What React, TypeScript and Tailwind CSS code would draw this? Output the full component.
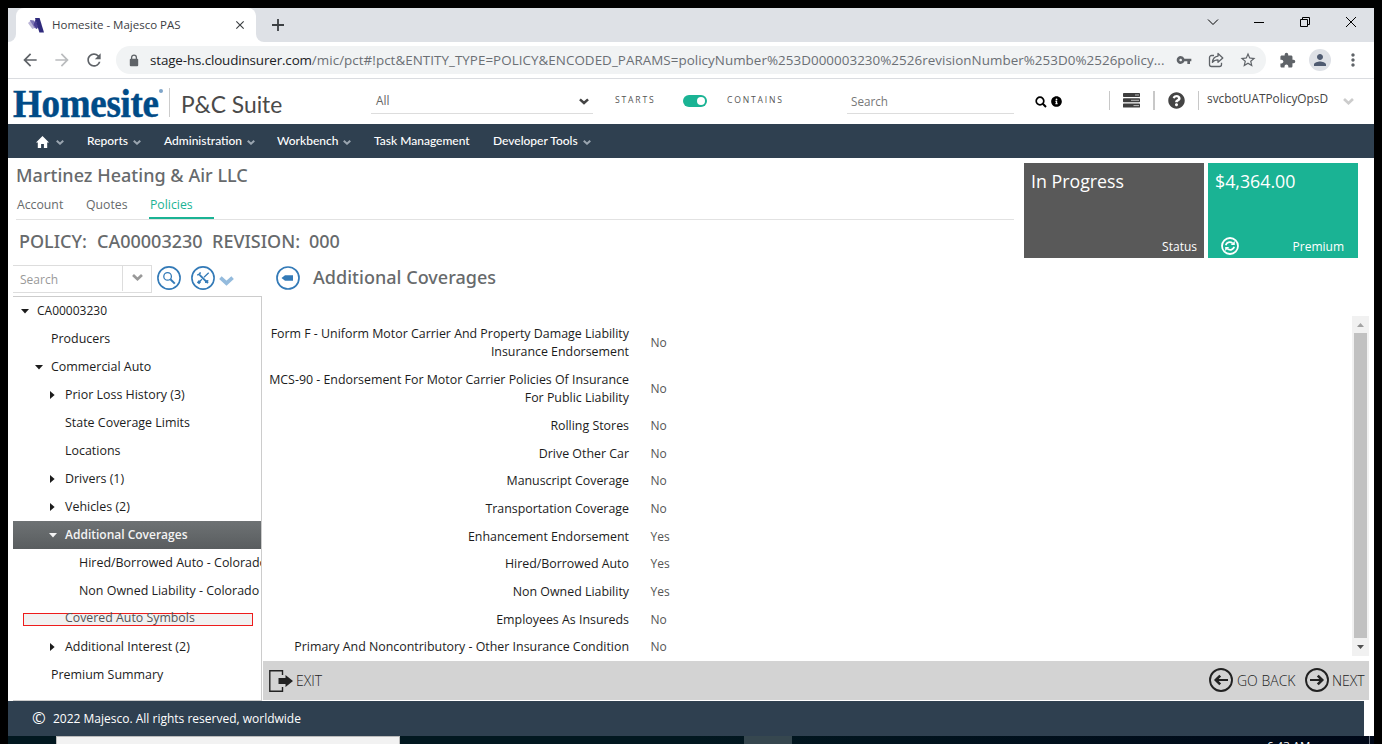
import React from 'react';
import { MdArrowBack, MdArrowForward, MdRefresh, MdLock, MdVpnKey, MdStarBorder, MdExtension, MdPerson, MdMoreVert, MdClose } from 'react-icons/md';
import { FaQuestionCircle, FaInfoCircle, FaSearch } from 'react-icons/fa';

function Chevron({ className }: { className: string }) {
  return (
    <svg viewBox="0 0 16 10" className={className} fill="none" stroke="currentColor" strokeWidth="4">
      <path d="M1.5 1.5 8 7.4 14.5 1.5" />
    </svg>
  );
}

function TabStrip() {
  return (
    <div className="flex h-[34px] shrink-0 bg-[#dee1e6]">
      <div className="flex w-2 items-end bg-white">
        <div className="h-full w-2 rounded-br-lg bg-[#dee1e6]" />
      </div>
      <div className="flex w-[240px] items-center rounded-t-lg bg-white pl-3">
        <svg viewBox="0 0 16 16" className="h-4 w-4 shrink-0">
          <path d="M0 6 3.5 3 6.5 11 4.4 12z" fill="#b9b3d6" />
          <path d="M1.8 3 6 3.4 9.4 12 6.4 11z" fill="#7d75b5" />
          <path d="M5.6 8 7.4 2 10.4 10 8.6 12z" fill="#4a3f92" />
          <path d="M7 1h4.600L16 15.500h-4.600z" fill="#2f2a7c" />
        </svg>
        <span className="ml-2 w-[172px] text-[11.5px] text-[#3c4043]">Homesite - Majesco PAS</span>
        <MdClose className="ml-[9px] h-[14px] w-[14px] text-[#3c4043]" />
      </div>
      <div className="flex w-2 bg-white">
        <div className="h-full w-2 rounded-bl-lg bg-[#dee1e6]" />
      </div>
      <svg viewBox="0 0 12 12" className="ml-2 mt-[11px] h-3 w-3" stroke="#3c4043" strokeWidth="1.8">
        <path d="M6 0v12M0 6h12" />
      </svg>
      <div className="ml-auto flex pt-[8px] pr-[17px] text-black">
        <svg viewBox="0 0 12 12" className="mr-[34px] h-3 w-3" fill="none" stroke="currentColor"><path d="m1 3.5 5 5 5-5" /></svg>
        <svg viewBox="0 0 12 12" className="mr-[34px] h-3 w-3" fill="none" stroke="currentColor"><path d="M1 6.5h10" /></svg>
        <svg viewBox="0 0 12 12" className="mr-[34px] h-3 w-3" fill="none" stroke="currentColor"><path d="M1.5 3.5h7v7h-7zM3.5 3.5v-2h7v7h-2" /></svg>
        <svg viewBox="0 0 12 12" className="h-3 w-3" fill="none" stroke="currentColor"><path d="m1 1 10 10M11 1 1 11" /></svg>
      </div>
    </div>
  );
}

function AddressBar() {
  return (
    <div className="flex h-[37px] shrink-0 items-center border-b border-[#dadce0] pl-[12px] text-[#5f6368]">
      <MdArrowBack className="h-5 w-5" />
      <MdArrowForward className="ml-3 h-5 w-5 text-[#babcbe]" />
      <MdRefresh className="ml-3 h-5 w-5" />
      <div className="ml-[12px] flex h-7 w-[1150px] items-center rounded-full bg-[#f1f3f4] pl-[11px]">
        <svg viewBox="0 0 10 13" className="h-[13px] w-[10px] mx-[2px]" fill="none">
          <path d="M2.600 6V3.500a2.400 2.400 0 0 1 4.800 0V6" stroke="currentColor" strokeWidth="1.300" />
          <rect x=".8" y="4.800" width="8.400" height="7.400" rx="1" fill="currentColor" />
        </svg>
        <div className="ml-[9px] w-[1019px] whitespace-nowrap text-[13.4px] text-[#6b6f74]">
          <span className="tracking-[-0.13px] text-[#202124]">stage-hs.cloudinsurer.com</span>
          <span className="tracking-[0.045px]">/mic/pct#!pct&amp;ENTITY_TYPE=POLICY&amp;ENCODED_PARAMS=policyNumber%253D000003230%2526revisionNumber%253D0%2526policy...</span>
        </div>
        <MdVpnKey className="ml-[7px] h-4 w-4" />
        <svg viewBox="0 0 16 16" className="ml-4 h-4 w-4" fill="none" stroke="currentColor" strokeWidth="1.3" strokeLinejoin="round">
          <path d="M6 3.5H3.5a2 2 0 0 0-2 2v7a2 2 0 0 0 2 2h8a2 2 0 0 0 2-2v-1.8" />
          <path d="M10 1.5 14.8 6 10 10.2V7.8C7.4 7.8 5.7 8.6 4.4 10.4 4.7 7 6.5 4.5 10 4.1z" />
        </svg>
        <MdStarBorder className="ml-[15px] h-[18px] w-[18px]" />
      </div>
      <MdExtension className="ml-[13px] h-[17px] w-[17px]" />
      <div className="ml-[13px] flex h-[22px] w-[22px] items-center justify-center rounded-full bg-[#dee1e6]">
        <MdPerson className="h-[18px] w-[18px] text-[#4f5b71]" />
      </div>
      <MdMoreVert className="ml-3 h-5 w-5" />
    </div>
  );
}

function AppHeader() {
  return (
    <div className="flex h-[45px] shrink-0 text-[#555]">
      <div className="h-[40px] w-[150px] pl-[5px]">
        <span className="mt-px block origin-left scale-x-[0.925] font-['Liberation_Serif',serif] text-[40px] leading-[47px] font-bold tracking-[-0.3px] text-[#004b87] [-webkit-text-stroke:0.5px_#004b87]">Homesite</span>
      </div>
      <div className="mt-[10px] ml-[1px] h-1 w-1 rounded-full bg-[#7fa5c9]" />
      <div className="mt-[9px] ml-[6px] h-[29px] w-px bg-[#ccc]" />
      <span className="mt-[10px] ml-[11px] w-[190px] font-[Lato,sans-serif] text-[22.8px] leading-[30px] whitespace-nowrap text-[#4a4a4a]">P&amp;C Suite</span>
      <div className="flex h-[35px] w-[222px] justify-between border-b border-[#ddd] pr-[4px] pl-[5px]">
        <span className="mt-[12px] text-[11.8px] leading-[18px] text-[#666]">All</span>
        <Chevron className="mt-[19px] h-[7px] w-[10px] text-[#444]" />
      </div>
      <span className="mt-[14px] ml-[22px] w-[68px] text-[8.6px] leading-[14px] tracking-[1.8px]">STARTS</span>
      <div className="mt-4 flex h-3 w-6 justify-end rounded-full bg-[#1ab394] p-[2px]">
        <div className="h-2 w-2 rounded-full bg-white" />
      </div>
      <span className="mt-[14px] ml-[20px] w-[120px] text-[8.6px] leading-[14px] tracking-[1.8px]">CONTAINS</span>
      <div className="h-[35px] w-[167px] border-b border-[#ddd] pl-1">
        <span className="mt-[13px] block text-[11.7px] leading-[18px] text-[#777]">Search</span>
      </div>
      <svg viewBox="0 0 12 12" className="mt-[17px] ml-[21px] h-3 w-3" fill="none" stroke="black">
        <circle cx="5" cy="5" r="3.800" strokeWidth="1.700" />
        <path d="m7.800 7.800 3.200 3.200" strokeWidth="2" />
      </svg>
      <FaInfoCircle className="mt-[17px] ml-[4px] h-[11px] w-[11px] text-black" />
      <div className="mt-3 ml-[47px] h-[19px] w-px bg-[#c8c8c8]" />
      <svg viewBox="0 0 18 15" className="mt-[14px] ml-[13px] h-[15px] w-[18px]">
        <rect width="17" height="4" rx=".7" fill="#3e3e3e" />
        <rect y="5.3" width="17" height="4" rx=".7" fill="#3e3e3e" />
        <rect y="10.6" width="17" height="4" rx=".7" fill="#3e3e3e" />
        <path d="M12 2h4M8 7.3h8M10.500 12.600H16" stroke="#bbb" />
      </svg>
      <div className="mt-3 ml-[12px] h-[19px] w-[2px] bg-[#c8c8c8]" />
      <FaQuestionCircle className="mt-[13px] ml-[13px] h-[17px] w-[17px] text-[#444]" />
      <div className="mt-3 ml-[13px] h-[19px] w-px bg-[#c8c8c8]" />
      <span className="mt-[10px] ml-[8px] w-[136px] text-[11.85px] leading-[18px] text-[#444]">svcbotUATPolicyOpsD</span>
      <Chevron className="mt-[19px] h-[7px] w-[11px] text-[#ccc]" />
    </div>
  );
}

function NavItem({ label, className, menu = true }: { label: string; className: string; menu?: boolean }) {
  return (
    <div className={`flex items-center gap-[5px] whitespace-nowrap ${className}`}>
      <span>{label}</span>
      {menu && <Chevron className="mt-[2px] h-[5px] w-2 text-[#9aa5b0]" />}
    </div>
  );
}

function Nav() {
  return (
    <div className="flex h-[34px] shrink-0 items-center bg-[#2f4050] pl-7 font-[Lato,sans-serif] text-[12px] font-medium text-white">
      <svg viewBox="0 0 13 12" className="mt-[2px] h-3 w-[13px]" fill="white">
        <path d="M6.5 0 13 6.5h-1.8V12H7.9V8H5.1v4H1.8V6.5H0L6.5 0z" />
      </svg>
      <Chevron className="mt-[2px] ml-[7px] h-[5px] w-2 text-[#9aa5b0]" />
      <NavItem label="Reports" className="ml-[23px] w-[77px]" />
      <NavItem label="Administration" className="w-[113px]" />
      <NavItem label="Workbench" className="w-[97px]" />
      <NavItem label="Task Management" className="w-[119px]" menu={false} />
      <NavItem label="Developer Tools" className="" />
    </div>
  );
}

function AccountHeader() {
  return (
    <div className="flex h-[104px] shrink-0 pl-2">
      <div className="w-[998px] text-[#676a6c]">
        <h1 className="mt-[5px] font-['Noto_Sans',sans-serif] text-[18px] leading-6 font-medium tracking-[0.03px]">Martinez Heating &amp; Air LLC</h1>
        <div className="mt-[8px] flex h-[25px] border-b border-[#e2e2e2] pl-px text-[12.25px] leading-[20px]">
          <span className="w-[69px]">Account</span>
          <span className="w-[63px]">Quotes</span>
          <span className="h-[24px] w-[65px] border-b-2 border-[#1ab394] pl-px text-[#1ab394]">Policies</span>
        </div>
        <h2 className="mt-[9px] flex pl-[3px] font-['Noto_Sans',sans-serif] text-[18px] leading-6 font-medium whitespace-nowrap">
          <span className="w-[78px]">POLICY:</span>
          <span className="w-[115px]">CA00003230</span>
          <span className="w-[97px]">REVISION:</span>
          <span>000</span>
        </h2>
      </div>
      <div className="mt-[5px] ml-[10px] flex h-[95px] w-[180px] flex-col justify-between bg-[#595959] px-[7px] pt-[6px] pb-[2px] text-white">
        <span className="text-[17.8px] leading-6">In Progress</span>
        <span className="text-right text-[12px] leading-[18px]">Status</span>
      </div>
      <div className="mt-[5px] ml-1 flex h-[95px] w-[150px] flex-col justify-between bg-[#1ab394] px-[7px] pt-[6px] pb-[2px] text-white">
        <span className="text-[17.8px] leading-6">$4,364.00</span>
        <div className="flex items-center justify-between pr-[7px] pl-[6px]">
          <svg viewBox="0 0 18 18" className="mt-[-2px] h-[18px] w-[18px]" fill="none" stroke="white" strokeWidth="1.8">
            <circle cx="9" cy="9" r="8" />
            <path d="M4.8 8.2C5.4 5.6 8.9 4 11.7 6.4M13.2 9.8C12.600 12.400 9.100 14 6.300 11.600" />
            <path d="M13.8 4v4h-4zM4.200 14v-4h4z" fill="white" stroke="none" />
          </svg>
          <span className="text-[12px] leading-[18px]">Premium</span>
        </div>
      </div>
    </div>
  );
}

type TreeRow = { label: string; level: number; state?: 'open' | 'closed'; selected?: boolean; marked?: boolean };

const tree: TreeRow[] = [
  { label: 'CA00003230', level: 0, state: 'open' },
  { label: 'Producers', level: 1 },
  { label: 'Commercial Auto', level: 1, state: 'open' },
  { label: 'Prior Loss History (3)', level: 2, state: 'closed' },
  { label: 'State Coverage Limits', level: 2 },
  { label: 'Locations', level: 2 },
  { label: 'Drivers (1)', level: 2, state: 'closed' },
  { label: 'Vehicles (2)', level: 2, state: 'closed' },
  { label: 'Additional Coverages', level: 2, state: 'open', selected: true },
  { label: 'Hired/Borrowed Auto - Colorado', level: 3 },
  { label: 'Non Owned Liability - Colorado', level: 3 },
  { label: 'Covered Auto Symbols', level: 2, marked: true },
  { label: 'Additional Interest (2)', level: 2, state: 'closed' },
  { label: 'Premium Summary', level: 1 },
];

const indent = ['pl-[7px]', 'pl-[21px]', 'pl-[35px]', 'pl-[49px]'];

function Tree() {
  return (
    <div className="h-[405px] w-[249px] overflow-hidden border-t border-r border-b border-[#ccc] text-[#1c1c1c]">
      {tree.map((row) =>
        row.marked ? (
          <div key={row.label} className="flex h-7 items-center pl-[10px]">
            <div className="flex h-[13px] w-[230px] items-center border border-[#ee1c1c] bg-[#f1f1f1] pl-[41px] text-[12.35px] leading-[12px] text-[#555]">
              <span className="mt-[-2px] whitespace-nowrap">{row.label}</span>
            </div>
          </div>
        ) : (
          <div
            key={row.label}
            className={`flex h-7 items-center ${indent[row.level]} ${row.selected ? 'bg-linear-to-b from-[#6e7274] to-[#595d5f] font-semibold text-[#f4f4f4]' : ''}`}
          >
            <span className="flex w-[17px] shrink-0 items-center justify-start pl-px">
              {row.state === 'open' && <svg viewBox="0 0 8 5" className="h-[5px] w-2 fill-current"><path d="M0 0h8L4 4.6z" /></svg>}
              {row.state === 'closed' && <svg viewBox="0 0 5 8" className="ml-px h-2 w-[5px] fill-current"><path d="M0 0v8l4.6-4z" /></svg>}
            </span>
            <span className={`whitespace-nowrap ${row.level === 0 || row.selected ? 'text-[12px]' : 'text-[12.45px]'}`}>{row.label}</span>
          </div>
        ),
      )}
    </div>
  );
}

function Sidebar() {
  return (
    <div className="flex w-[255px] shrink-0 flex-col pl-[5px]">
      <div className="flex h-[34px] items-start">
        <div className="mt-[3px] flex h-7 w-[139px] border-t border-r border-b border-[#ddd]">
          <span className="w-[109px] pl-[7px] text-[12px] leading-[27px] text-[#999]">Search</span>
          <span className="mt-[-1px] flex h-[26px] flex-1 justify-center border-l border-[#ddd]">
            <Chevron className="mt-[9px] h-[7px] w-[11px] text-[#999]" />
          </span>
        </div>
        <svg viewBox="0 0 24 24" className="mt-[4px] ml-[5px] h-6 w-6 text-[#337ab7]" fill="none" stroke="currentColor">
          <circle cx="12" cy="12" r="11.1" strokeWidth="1.6" />
          <circle cx="10.6" cy="10.4" r="3.8" strokeWidth="1.3" />
          <path d="m13.4 13.2 4.4 4.4" strokeWidth="2" />
        </svg>
        <svg viewBox="0 0 24 24" className="mt-[4px] ml-[10px] h-6 w-6 text-[#337ab7]" fill="none" stroke="currentColor">
          <circle cx="12" cy="12" r="11.1" strokeWidth="1.6" />
          <path d="M17.7 6.7 13 11.3M11 13.2l-2.2 2" strokeWidth="1.2" />
          <path d="m9 15-2 2.4" strokeWidth="3" />
          <path d="m8.6 8.8 6.5 6.5M15 15l2 2" strokeWidth="1.9" />
          <path d="M6.2 8.6a2.3 2.3 0 0 0 3-2.4M14.7 17.1a2.3 2.3 0 0 1 2.6-2.3" strokeWidth="1.5" />
        </svg>
        <Chevron className="mt-[14px] ml-[4px] h-[10px] w-[15px] text-[#94bbdd]" />
      </div>
      <Tree />
    </div>
  );
}

const coverages: [string, string][] = [
  ['Form F - Uniform Motor Carrier And Property Damage Liability Insurance Endorsement', 'No'],
  ['MCS-90 - Endorsement For Motor Carrier Policies Of Insurance For Public Liability', 'No'],
  ['Rolling Stores', 'No'],
  ['Drive Other Car', 'No'],
  ['Manuscript Coverage', 'No'],
  ['Transportation Coverage', 'No'],
  ['Enhancement Endorsement', 'Yes'],
  ['Hired/Borrowed Auto', 'Yes'],
  ['Non Owned Liability', 'Yes'],
  ['Employees As Insureds', 'No'],
  ['Primary And Noncontributory - Other Insurance Condition', 'No'],
];

function Arrow({ flip = false }: { flip?: boolean }) {
  return (
    <svg viewBox="0 0 24 24" className={`h-6 w-6 ${flip ? 'rotate-180' : ''}`} fill="none" stroke="#222">
      <circle cx="12" cy="12" r="11" strokeWidth="1.9" />
      <path d="M19 12H7" strokeWidth="2" />
      <path d="M11.200 7.600 6.800 12l4.400 4.400" strokeWidth="2.600" />
    </svg>
  );
}

function Detail() {
  return (
    <div className="flex w-[1106px] shrink-0 flex-col">
      <div className="flex h-[54px] items-start pl-[13px]">
        <svg viewBox="0 0 24 24" className="mt-[4px] h-6 w-6" fill="none" stroke="#337ab7" strokeWidth="1.7">
          <circle cx="12" cy="12" r="11" />
          <path d="M5.5 12 9 9.200h8v5.600H9z" fill="#337ab7" stroke="none" />
        </svg>
        <h3 className="mt-[3px] ml-[13px] font-['Noto_Sans',sans-serif] text-[18px] leading-6 font-medium tracking-[0.03px] text-[#676a6c]">Additional Coverages</h3>
      </div>
      <div className="flex h-[340px] overflow-hidden">
        <div className="flex-1 pt-[4.6px] text-[12.4px] leading-[18px] text-[#1c1c1c]">
          {coverages.map(([label, value]) => (
            <div key={label} className="flex items-center py-[4.850px]">
              <div className="w-[366px] pl-1 text-right">{label}</div>
              <div className="ml-[21.500px] text-[12px] text-[#555]">{value}</div>
            </div>
          ))}
        </div>
        <div className="flex w-[17px] flex-col items-center bg-[#f1f1f1]">
          <svg viewBox="0 0 17 17" className="h-[17px] w-[17px] shrink-0"><path d="M5 11h7L8.500 7z" fill="#a3a3a3" /></svg>
          <div className="h-[305px] w-[13px] bg-[#c1c1c1]" />
          <svg viewBox="0 0 17 18" className="h-[18px] w-[17px] shrink-0"><path d="M5 7h7l-3.500 4z" fill="#505050" /></svg>
        </div>
      </div>
      <div className="mt-[5px] flex h-[39px] items-center bg-[#d3d3d3] pr-[3px] pb-px pl-[6px] font-light text-[#222]">
        <svg viewBox="0 0 24 22" className="mt-px h-[22px] w-6">
          <path d="M13.500 5V.8H.8v20.400h12.700V17" fill="none" stroke="#222" strokeWidth="1.4" />
          <path d="M9.500 8h7V5l7.500 6-7.500 6v-3h-7z" fill="#222" />
        </svg>
        <span className="ml-[3px] flex-1 text-[14px]">EXIT</span>
        <Arrow />
        <span className="ml-[4px] w-[68px] text-[14px] whitespace-nowrap">GO BACK</span>
        <Arrow flip />
        <span className="ml-[3px] w-[34px] text-[14px] whitespace-nowrap">NEXT</span>
      </div>
    </div>
  );
}

export default function App() {
  return (
    <div className="flex h-[744px] w-[1382px] flex-col overflow-hidden bg-black px-2 pt-2 font-['Open_Sans','Noto_Sans',sans-serif]">
      <div className="flex h-[728px] shrink-0 flex-col bg-white">
        <TabStrip />
        <AddressBar />
        <AppHeader />
        <Nav />
        <AccountHeader />
        <div className="flex h-[439px] shrink-0">
          <Sidebar />
          <Detail />
        </div>
        <div className="flex h-[35px] w-[1356px] shrink-0 items-center bg-[#2f4050] pl-[24px] text-[12px] text-white">
          <span className="mt-[-2px] w-[21px] text-[16.500px] leading-[20px]">©</span>
          <span>2022 Majesco. All rights reserved, worldwide</span>
        </div>
      </div>
      <div className="flex h-2 items-start overflow-hidden bg-linear-to-r from-[#021820] from-50% to-[#000818]">
        <div className="ml-12 h-2 w-[344px] border border-b-0 border-[#bbb] bg-[#f2f2f2]" />
        <div className="ml-[344px] h-2 w-12 bg-[#36474f]" />
        <span className="mt-[2px] ml-[475px] text-[11.500px] leading-[16px] whitespace-nowrap text-white">6:43 AM</span>
        <div className="ml-auto mr-[4px] h-2 w-px bg-[#6b7280]" />
      </div>
    </div>
  );
}
